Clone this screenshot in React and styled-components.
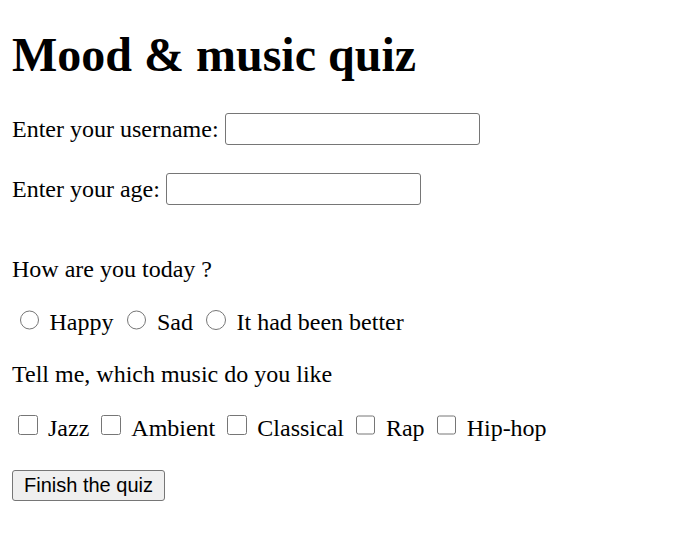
import React from "react";
import styled, { createGlobalStyle } from "styled-components";

const GlobalStyle = createGlobalStyle`
  body {
    margin: 0;
    background: #ffffff;
    color: #000000;
    font-family: "Liberation Serif", "Times New Roman", serif;
    font-size: 24px;
  }
`;

const Page = styled.main`
  display: flex;
  flex-direction: column;
  align-items: flex-start;
  padding: 27px 12px 40px 12px;
`;

const Title = styled.h1`
  margin: 0;
  font-size: 48px;
  font-weight: 700;
  line-height: 56px;
`;

const Form = styled.form`
  display: flex;
  flex-direction: column;
  align-items: flex-start;
`;

const FieldRow = styled.label`
  display: flex;
  align-items: center;
  height: 32px;
  line-height: 28px;
  margin-top: ${(p) => p.$top}px;
`;

const TextInput = styled.input`
  box-sizing: border-box;
  width: 255px;
  height: 32px;
  margin-left: 6px;
  padding: 1px 3px;
  border: 1px solid #767676;
  border-radius: 3px;
  background: #ffffff;
  font-family: "Liberation Sans", Arial, sans-serif;
  font-size: 20px;
`;

const Question = styled.p`
  margin: ${(p) => p.$top}px 0 0 0;
  line-height: 28px;
`;

const Choices = styled.div`
  display: flex;
  align-items: center;
  gap: 6px;
  height: 28px;
  margin-top: ${(p) => p.$top}px;
  line-height: 28px;
`;

const Choice = styled.label`
  display: flex;
  align-items: center;
`;

const Tick = styled.input`
  width: 19.5px;
  height: 19.5px;
  margin: ${(p) => (p.type === "radio" ? "0 10.5px 0 7.5px" : "0 10.5px 0 6px")};
  position: relative;
  top: ${(p) => (p.type === "radio" ? -2 : -3)}px;
`;

const SubmitButton = styled.button`
  box-sizing: border-box;
  height: 31px;
  margin-top: 28px;
  padding: 0 11px;
  border: 1px solid #767676;
  border-radius: 3px;
  background: #efefef;
  color: #000000;
  font-family: "Liberation Sans", Arial, sans-serif;
  font-size: 20px;
  line-height: 29px;
`;

const moods = ["Happy", "Sad", "It had been better"];
const genres = ["Jazz", "Ambient", "Classical", "Rap", "Hip-hop"];

export default function App() {
  return (
    <>
      <GlobalStyle />
      <Page>
        <Title>Mood &amp; music quiz</Title>
        <Form onSubmit={(e) => e.preventDefault()}>
          <FieldRow $top={30}>
            Enter your username: <TextInput type="text" name="username" />
          </FieldRow>
          <FieldRow $top={28}>
            Enter your age: <TextInput type="text" name="age" />
          </FieldRow>

          <Question $top={50}>How are you today ?</Question>
          <Choices $top={25}>
            {moods.map((m) => (
              <Choice key={m}>
                <Tick type="radio" name="mood" value={m} />
                {m}
              </Choice>
            ))}
          </Choices>

          <Question $top={24}>Tell me, which music do you like</Question>
          <Choices $top={26}>
            {genres.map((g) => (
              <Choice key={g}>
                <Tick type="checkbox" name="music" value={g} />
                {g}
              </Choice>
            ))}
          </Choices>

          <SubmitButton type="submit">Finish the quiz</SubmitButton>
        </Form>
      </Page>
    </>
  );
}
